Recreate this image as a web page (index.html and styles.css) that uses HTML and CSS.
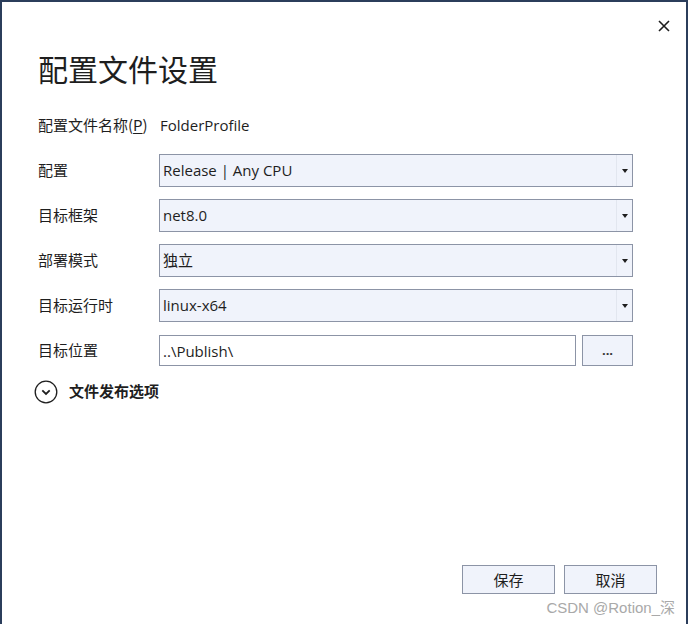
FILE: index.html
```html
<!DOCTYPE html>
<html lang="zh-CN">
<head>
<meta charset="utf-8">
<title>配置文件设置</title>
<link rel="stylesheet" href="styles.css">
</head>
<body>
<div class="dialog">
  <button class="close" aria-label="关闭">
    <svg width="12" height="12" viewBox="0 0 12 12"><path d="M1 1 L11 11 M11 1 L1 11" stroke="#1e1e1e" stroke-width="1.6" fill="none"/></svg>
  </button>
  <h1 class="title">配置文件设置</h1>
  <div class="form">
    <div class="row">
      <span class="label">配置文件名称(<u>P</u>)</span>
      <span class="value">FolderProfile</span>
    </div>
    <div class="row">
      <span class="label">配置</span>
      <div class="select"><span class="sel-text">Release | Any CPU</span><span class="arrow"></span></div>
    </div>
    <div class="row">
      <span class="label">目标框架</span>
      <div class="select"><span class="sel-text">net8.0</span><span class="arrow"></span></div>
    </div>
    <div class="row">
      <span class="label">部署模式</span>
      <div class="select"><span class="sel-text">独立</span><span class="arrow"></span></div>
    </div>
    <div class="row">
      <span class="label">目标运行时</span>
      <div class="select"><span class="sel-text">linux-x64</span><span class="arrow"></span></div>
    </div>
    <div class="row row-loc">
      <span class="label">目标位置</span>
      <div class="input">..\Publish\</div>
      <button class="browse">...</button>
    </div>
  </div>
  <div class="expander">
    <svg class="exp-icon" width="24" height="24" viewBox="0 0 24 24"><circle cx="12" cy="12" r="10.8" stroke="#1e1e1e" stroke-width="1.3" fill="none"/><path d="M8.3 10.4 L12 14 L15.7 10.4" stroke="#1e1e1e" stroke-width="1.8" fill="none"/></svg>
    <span class="exp-text">文件发布选项</span>
  </div>
  <div class="footer">
    <button class="btn">保存</button>
    <button class="btn">取消</button>
  </div>
  <div class="watermark">CSDN @Rotion_深</div>
</div>
</body>
</html>
```

FILE: styles.css
```css
html, body {
  margin: 0;
  padding: 0;
  background: #ffffff;
}
body {
  width: 689px;
  height: 624px;
  overflow: hidden;
  font-family: "Open Sans", "Noto Sans", "Noto Sans CJK SC", sans-serif;
  color: #1e1e1e;
}
.dialog {
  position: relative;
  box-sizing: border-box;
  width: 688px;
  height: 624px;
  border: 2px solid #2b3d5b;
  border-bottom: none;
  display: flex;
  flex-direction: column;
  padding-left: 36px;
}
.close {
  position: absolute;
  top: 16px;
  right: 14px;
  width: 16px;
  height: 16px;
  padding: 0;
  border: none;
  background: transparent;
  display: flex;
  align-items: center;
  justify-content: center;
}
.title {
  margin: 46px 0 0 0;
  font-family: "Noto Sans CJK SC", sans-serif;
  font-weight: 400;
  font-size: 30px;
  line-height: 40px;
  color: #1e1e1e;
}
.form {
  margin-top: 21px;
  display: flex;
  flex-direction: column;
  gap: 12px;
}
.row {
  display: flex;
  align-items: center;
  height: 33px;
  font-size: 15px;
}
.label {
  width: 121px;
  flex: none;
  font-family: "Noto Sans CJK SC", sans-serif;
  font-size: 15px;
  line-height: 20px;
  color: #1e1e1e;
  margin-top: -2px;
}
.label u {
  text-decoration-thickness: 1px;
  text-underline-offset: 2px;
}
.value {
  padding-left: 1px;
  font-size: 15px;
  margin-top: -2px;
}
.select {
  box-sizing: border-box;
  width: 474px;
  height: 33px;
  border: 1px solid #8c94a6;
  background: #f0f3fb;
  display: flex;
  align-items: center;
}
.sel-text {
  flex: 1;
  padding-left: 3px;
  font-family: "Open Sans", "Noto Sans CJK SC", sans-serif;
  font-size: 15px;
  line-height: 20px;
  margin-top: -1px;
}
.arrow {
  width: 15px;
  height: 31px;
  border-left: 1px solid #e2e6ef;
  display: flex;
  align-items: center;
  justify-content: center;
}
.arrow::after {
  content: "";
  width: 0;
  height: 0;
  border-left: 3.5px solid transparent;
  border-right: 3.5px solid transparent;
  border-top: 4px solid #1e1e1e;
}
.row-loc {
  margin-top: 0;
}
.input {
  box-sizing: border-box;
  width: 417px;
  height: 31px;
  border: 1px solid #8c94a6;
  background: #ffffff;
  padding-left: 3px;
  display: flex;
  align-items: center;
  font-size: 15px;
}
.browse {
  box-sizing: border-box;
  margin-left: 6px;
  width: 51px;
  height: 31px;
  border: 1px solid #8c94a6;
  background: #f0f3fb;
  font-family: "Open Sans", sans-serif;
  font-size: 13px;
  font-weight: 700;
  color: #333;
  padding: 0 0 2px 0;
  letter-spacing: 0;
}
.expander {
  margin-top: 9px;
  margin-left: -4px;
  display: flex;
  align-items: center;
  gap: 11px;
  height: 32px;
}
.exp-icon {
  flex: none;
}
.exp-text {
  font-family: "Noto Sans CJK SC", sans-serif;
  font-weight: 700;
  font-size: 15px;
  line-height: 20px;
  margin-top: -2px;
}
.footer {
  margin-top: auto;
  margin-bottom: 30px;
  margin-right: 29px;
  display: flex;
  justify-content: flex-end;
  gap: 9px;
}
.btn {
  box-sizing: border-box;
  width: 93px;
  height: 29px;
  border: 1px solid #8c94a6;
  background: #f0f3fb;
  font-family: "Noto Sans CJK SC", sans-serif;
  font-size: 15px;
  color: #1e1e1e;
  padding: 0;
}
.watermark {
  position: absolute;
  right: 11px;
  bottom: 7px;
  font-family: "Liberation Sans", "Noto Sans CJK SC", sans-serif;
  font-size: 15px;
  color: #a9a9a9;
}
```
